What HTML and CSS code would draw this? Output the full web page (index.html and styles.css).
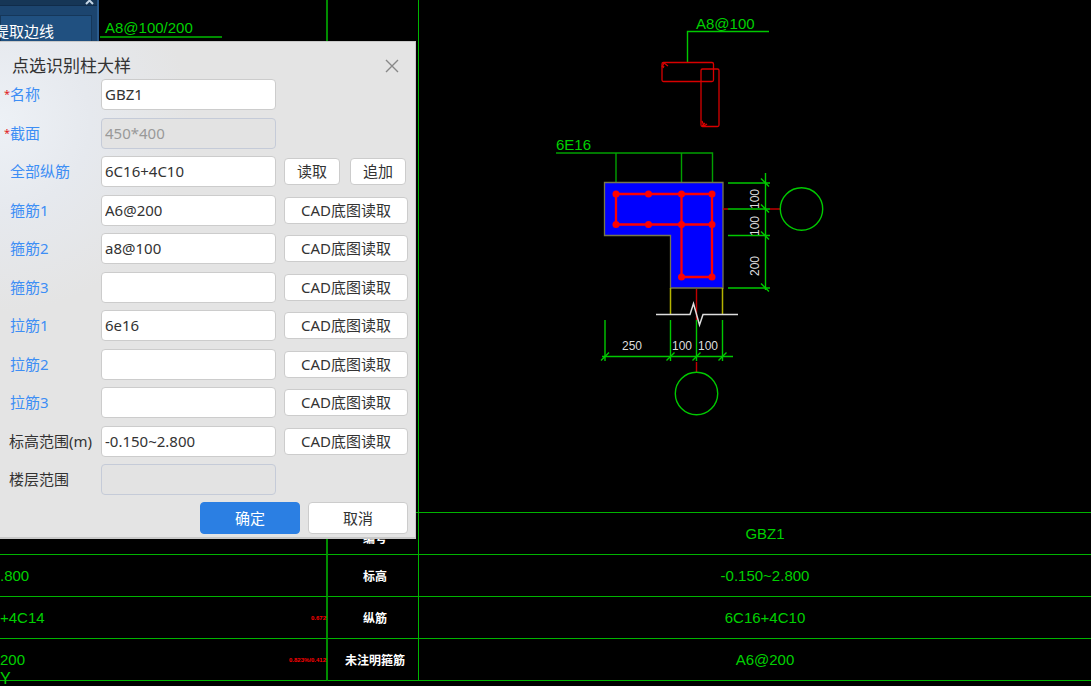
FILE: index.html
```
<!DOCTYPE html>
<html lang="zh-CN">
<head>
<meta charset="utf-8">
<title>点选识别柱大样</title>
<link rel="stylesheet" href="styles.css">
</head>
<body>
<main class="workspace">
  <table class="sheet">
    <colgroup><col class="col-left"><col class="col-name"><col></colgroup>
    <tbody>
      <tr class="row-drawing">
        <td><span class="leader">A8@100/200</span></td>
        <td></td>
        <td>
          <svg class="drawing" viewBox="419 0 672 512" role="img" aria-label="GBZ1">
            <g class="green">
              <path d="M769 31.5H687.500V62"/>
              <path d="M556 153H712.500V182M616 153V182M681.500 153V182" class="dim"/>
            </g>
            <g class="thin-red">
              <rect x="662" y="62.500" width="51.500" height="19" rx="1.500"/>
              <rect x="701" y="69" width="18" height="57.500" rx="1.500"/>
              <path d="M662 67L664 63L668 66M664 66L663 68M702 121L704 126L707 124M702 126L705 123"/>
            </g>
            <path class="concrete" d="M604.500 182.500H723V288H670.500V235.500H604.500Z"/>
            <g class="bars">
              <path d="M616 194H712V277H681.500V194M616 194V224.500H712"/>
            </g>
            <g class="dots">
              <circle cx="616" cy="194" r="3.500"/><circle cx="648.500" cy="194" r="3.500"/><circle cx="681.500" cy="194" r="3.500"/><circle cx="712" cy="194" r="3.500"/>
              <circle cx="616" cy="224.500" r="3.500"/><circle cx="648.500" cy="224.500" r="3.500"/><circle cx="681.500" cy="224.500" r="3.500"/><circle cx="712" cy="224.500" r="3.500"/>
              <circle cx="681.500" cy="277" r="3.500"/><circle cx="712" cy="277" r="3.500"/>
            </g>
            <path class="yellow" d="M670.500 288V314M722.500 288V314"/>
            <path class="axis" d="M696.500 289V320M696.500 362V372M723 209H728M770 209H781"/>
            <g class="green">
              <path d="M728 183H770M728 209H770M728 235.500H770M728 288H770M765.500 173V290"/>
              <path d="M761 178.500L769 186.500M761 204.500L769 212.500M761 231.500L769 239.500M761 283.500L769 291.500"/>
              <path d="M605 320V361M670.500 320V361M696.500 320V361M722.500 320V361M602 356.500H733"/>
              <path d="M601 360.500L609 352.500M666.500 360.500L674.500 352.500M692.500 360.500L700.500 352.500M718.500 360.500L726.500 352.500"/>
              <circle cx="801.500" cy="209" r="21.200"/>
              <circle cx="696.500" cy="393.500" r="21.200"/>
            </g>
            <path class="break" d="M656 314.500H690L693.500 303.500L699.500 325L703 314.500H738"/>
            <g class="note">
              <text x="696" y="29">A8@100</text>
              <text x="556" y="150">6E16</text>
            </g>
            <g class="dim-text">
              <text x="622" y="350">250</text>
              <text x="672" y="350">100</text>
              <text x="698" y="350">100</text>
              <text transform="translate(759 209) rotate(-90)">100</text>
              <text transform="translate(759 236) rotate(-90)">100</text>
              <text transform="translate(759 276) rotate(-90)">200</text>
            </g>
          </svg>
        </td>
      </tr>
      <tr class="row-id"><td></td><th scope="row">编号</th><td>GBZ1</td></tr>
      <tr><td>.800</td><th scope="row">标高</th><td>-0.150~2.800</td></tr>
      <tr><td><div class="split"><span>+4C14</span><span class="ratio">0.672</span></div></td><th scope="row">纵筋</th><td>6C16+4C10</td></tr>
      <tr><td><div class="split"><span>200</span><span class="ratio">0.823%/0.412</span></div></td><th scope="row">未注明箍筋</th><td>A6@200</td></tr>
    </tbody>
  </table>
  <span class="axis-y">Y</span>

  <aside class="toolbar">
    <div class="toolbar-head"><svg width="9" height="6" viewBox="0 0 9 6"><path d="M1 4L4.500 0.500L8 4"/></svg></div>
    <button class="tool" type="button">提取边线</button>
  </aside>

  <form class="dialog" role="dialog" aria-labelledby="dialog-title">
    <header class="dialog-head">
      <h1 id="dialog-title">点选识别柱大样</h1>
      <button class="close" type="button" aria-label="关闭"><svg width="14" height="14" viewBox="0 0 14 14"><path d="M1 1L13 13M13 1L1 13"/></svg></button>
    </header>
    <div class="fields">
      <div class="field"><label for="f1"><i>*</i>名称</label><input id="f1" value="GBZ1"></div>
      <div class="field"><label for="f2"><i>*</i>截面</label><input id="f2" value="450*400" disabled></div>
      <div class="field"><label for="f3">全部纵筋</label><input id="f3" value="6C16+4C10"><div class="pair"><button type="button">读取</button><button type="button">追加</button></div></div>
      <div class="field"><label for="f4">箍筋1</label><input id="f4" value="A6@200"><button type="button">CAD底图读取</button></div>
      <div class="field"><label for="f5">箍筋2</label><input id="f5" value="a8@100"><button type="button">CAD底图读取</button></div>
      <div class="field"><label for="f6">箍筋3</label><input id="f6"><button type="button">CAD底图读取</button></div>
      <div class="field"><label for="f7">拉筋1</label><input id="f7" value="6e16"><button type="button">CAD底图读取</button></div>
      <div class="field"><label for="f8">拉筋2</label><input id="f8"><button type="button">CAD底图读取</button></div>
      <div class="field"><label for="f9">拉筋3</label><input id="f9"><button type="button">CAD底图读取</button></div>
      <div class="field plain"><label for="f10">标高范围(m)</label><input id="f10" value="-0.150~2.800"><button type="button">CAD底图读取</button></div>
      <div class="field plain"><label for="f11">楼层范围</label><input id="f11" disabled></div>
    </div>
    <footer class="actions">
      <button class="primary" type="button">确定</button>
      <button type="button">取消</button>
    </footer>
  </form>
</main>
</body>
</html>
```
FILE: styles.css
```
* { box-sizing: border-box; }

body {
  margin: 0;
  background: #000;
  font: 15px/20px "Noto Sans", "Noto Sans CJK SC", sans-serif;
  overflow: hidden;
}

.workspace { position: relative; min-height: 100vh; }

/* CAD sheet */
.sheet {
  width: 100%;
  table-layout: fixed;
  border-collapse: separate;
  border-spacing: 0;
  color: #00d000;
  font: 15px/20px "Liberation Sans", "Noto Sans CJK SC", sans-serif;
}
.col-left { width: 328px; }
.col-name { width: 91px; }
.sheet td, .sheet th {
  height: 42px;
  padding: 0;
  border-bottom: 1px solid #00b400;
  text-align: center;
  vertical-align: middle;
}
.sheet td:first-child { border-right: 2px solid #008c00; text-align: left; }
.sheet th, .row-drawing td:nth-child(2) { border-right: 1px solid #00b400; }
.sheet th { padding-left: 4px; color: #fff; font-family: "Noto Sans CJK SC", sans-serif; font-size: 12px; font-weight: 700; }
.sheet th + td { padding-left: 20px; }
.sheet .row-id th { padding-top: 8px; }
.sheet .row-drawing td { vertical-align: top; }
.leader {
  display: block;
  width: 122px;
  margin: 20px 0 0 100px;
  padding: 0 5px;
  border-bottom: 2px solid #008c00;
  line-height: 16px;
}
.split { display: flex; justify-content: space-between; align-items: center; }
.ratio { color: #f00; font-size: 6px; font-weight: 700; }
.axis-y { position: absolute; left: 0; bottom: 0; color: #00d000; font: 16px/14px "Liberation Sans", sans-serif; }

.drawing { display: block; width: 100%; height: 512px; fill: none; }
.green { stroke: #00c800; stroke-width: 1.4; }
.dim { stroke: #00a000; }
.thin-red { stroke: #d80000; stroke-width: 1.3; }
.concrete { fill: #00f; stroke: #77774c; stroke-width: 1.3; }
.bars { stroke: #f00; stroke-width: 2.3; }
.dots { fill: #f00; }
.yellow { stroke: #b4b400; stroke-width: 1.5; }
.axis { stroke: #c00000; stroke-width: 1.4; }
.break { stroke: #ddd; stroke-width: 1.5; }
.note { fill: #00d000; }
.dim-text { fill: #ddd; font-size: 12px; }

/* Toolbar */
.toolbar {
  position: absolute;
  top: 0;
  left: 0;
  width: 99px;
  height: 41px;
  background: #1c456f;
  border-right: 2px solid #2b5b8d;
  overflow: hidden;
}
.toolbar-head { display: flex; justify-content: flex-end; height: 6px; padding-right: 3px; background: #163656; border-bottom: 1px solid #102c4a; }
.toolbar-head path { fill: none; stroke: #c5d6e6; stroke-width: 2; }
.tool {
  display: flex;
  justify-content: flex-end;
  width: 92px;
  height: 32px;
  margin-top: 9px;
  padding: 5px 37px 0 0;
  border: 1px solid #15375a;
  background: #205080;
  color: #fff;
  font: inherit;
  white-space: nowrap;
}

/* Dialog */
.dialog {
  position: absolute;
  top: 41px;
  left: 0;
  width: 416px;
  padding: 10px 7px 3px 0;
  border: solid #c8c8c8;
  border-width: 1px 1px 2px 0;
  background: radial-gradient(circle at 0 80px, #edf1f6 0, #e6e9ee 90px, #e4e4e4 190px);
  color: #333;
}
.dialog-head { display: flex; justify-content: space-between; align-items: center; height: 27px; padding: 0 9px 0 12px; }
.dialog-head h1 { margin: 0; font-size: 17px; line-height: 27px; font-weight: 400; }
.close { display: flex; padding: 0; border: 0; background: none; }
.close path { fill: none; stroke: #888; stroke-width: 1.4; }
.fields { display: flex; flex-direction: column; justify-content: space-between; min-height: 416px; }
.field { display: grid; grid-template-columns: 101px 175px 1fr; align-items: center; }
.field > :nth-child(3) { margin-left: 8px; }
.field label { position: relative; padding: 0 0 1px 10px; color: #3d8ef5; white-space: nowrap; }
.field.plain label { padding-left: 9px; color: #333; }
.field label i { position: absolute; left: 4px; color: #e02020; font-size: 11px; font-style: normal; }
.field input {
  width: 100%;
  height: 31px;
  padding: 0 4px 1px 3px;
  border: 1px solid #ccc;
  border-radius: 4px;
  background: #fff;
  color: #333;
  font: inherit;
}
.field input:disabled { border-color: #c5cbd8; background: #e3e3e3; color: #999; }
.dialog .field button, .actions button {
  height: 27px;
  padding: 0 0 1px;
  border: 1px solid #ccc;
  border-radius: 4px;
  background: #fff;
  color: #333;
  font: inherit;
}
.pair { display: flex; gap: 10px; padding-right: 2px; }
.pair button { flex: 1; }
.actions { display: flex; justify-content: flex-end; gap: 8px; margin-top: 7px; }
.actions button { width: 100px; height: 32px; }
.actions .primary { border-color: #2b7fe3; background: #2b7fe3; color: #fff; }
```
